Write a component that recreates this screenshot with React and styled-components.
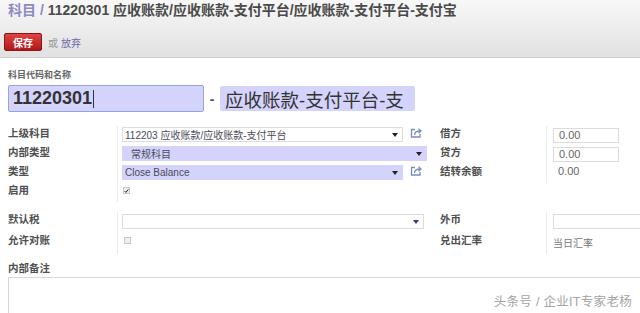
import React from "react";
import styled, { createGlobalStyle } from "styled-components";

const GlobalStyle = createGlobalStyle`
  body {
    margin: 0;
    background: #fff;
    font-family: "Liberation Sans", "Noto Sans CJK SC", sans-serif;
  }
`;

const FONT = `"Liberation Sans", "Noto Sans CJK SC", sans-serif`;

const Page = styled.div`
  position: relative;
  width: 640px;
  height: 313px;
  overflow: hidden;
  background: #fff;
`;

const Header = styled.div`
  height: 58px;
  box-sizing: border-box;
  background: linear-gradient(#f8f8f8, #e1e1e1);
  border-bottom: 1px solid #cfcfcf;
  padding: 1px 8px 0 4px;
`;

const Title = styled.h1`
  margin: 0 0 0 4px;
  font: bold 14px/18px ${FONT};
  color: #4a4a4a;
  white-space: nowrap;
`;

const Crumb = styled.span`
  color: #8a8ac4;
`;

const Actions = styled.div`
  display: flex;
  align-items: center;
  gap: 6px;
  margin-top: 14px;
  font: 10px ${FONT};
`;

const SaveButton = styled.button`
  width: 38px;
  height: 18px;
  padding: 0;
  background: linear-gradient(#e04444, #b01818);
  border: 1px solid #8c1414;
  border-radius: 2px;
  color: #fff;
  font: bold 10px ${FONT};
`;

const Or = styled.span`
  color: #999;
`;

const Discard = styled.span`
  color: #6a6aaa;
  margin-left: -3px;
`;

const Sheet = styled.div`
  padding-left: 8px;
`;

const SmallLabel = styled.div`
  margin-top: 11px;
  font: bold 9px/12px ${FONT};
  color: #666;
`;

const NameRow = styled.div`
  display: flex;
  align-items: center;
  margin-top: 4px;
`;

const BigInput = styled.div`
  box-sizing: border-box;
  width: ${(p) => p.$w}px;
  height: ${(p) => p.$h}px;
  background: #d3d3fb;
  border: 1px solid ${(p) => (p.$focus ? "#8fa6e0" : "#d3d3fb")};
  border-radius: 2px;
  display: flex;
  align-items: center;
  padding-left: 4px;
  color: #333;
  white-space: nowrap;
  overflow: hidden;
  font: ${(p) => (p.$bold ? "bold 18px" : "18.5px")} ${FONT};
`;

const Caret = styled.span`
  display: inline-block;
  width: 1px;
  height: 18px;
  background: #333;
  margin-left: 1px;
`;

const Dash = styled.span`
  width: 16px;
  text-align: center;
  font: bold 14px ${FONT};
  color: #555;
`;

const Section = styled.div`
  display: flex;
  margin-top: ${(p) => p.$top}px;
`;

const Group = styled.div`
  display: grid;
  grid-template-columns: ${(p) => p.$cols};
  grid-auto-rows: ${(p) => p.$row}px;
  margin-right: ${(p) => p.$gap || 0}px;
`;

const Label = styled.div`
  font: bold 10.5px/14px ${FONT};
  color: #505050;
  white-space: nowrap;
`;

const Value = styled.div`
  border-left: 1px solid #ebebeb;
  padding-left: ${(p) => p.$pad}px;
  display: flex;
  align-items: flex-start;
  gap: 7px;
  padding-top: ${(p) => p.$pt || 1}px;
  font: ${(p) => p.$size || 11}px ${FONT};
  color: ${(p) => p.$color || "#666"};
  white-space: nowrap;
`;

const Select = styled.div`
  box-sizing: border-box;
  width: ${(p) => p.$w}px;
  height: 15px;
  background: ${(p) => (p.$req ? "#d3d3fb" : "#fff")};
  border: 1px solid ${(p) => (p.$req ? "#d3d3fb" : "#dcdcdc")};
  display: flex;
  align-items: center;
  justify-content: space-between;
  padding: 0 4px 0 ${(p) => p.$indent || 2}px;
  font: 10px ${FONT};
  color: #4a4a5a;
  white-space: nowrap;
  overflow: hidden;
`;

const Arrow = styled.span`
  width: 0;
  height: 0;
  border-left: 3px solid transparent;
  border-right: 3px solid transparent;
  border-top: 4px solid ${(p) => p.$color || "#222"};
`;

const NumInput = styled.div`
  box-sizing: border-box;
  width: ${(p) => p.$w || 66}px;
  height: 15px;
  border: 1px solid #dcdcdc;
  padding-left: 5px;
  font: 11px/13px ${FONT};
  color: #666;
`;

const Check = styled.span`
  box-sizing: border-box;
  display: inline-flex;
  align-items: center;
  justify-content: center;
  width: 7px;
  height: 7px;
  margin-top: ${(p) => p.$mt || 3}px;
  border: 1px solid #c8c8c8;
  background: #f0f0f0;
`;

const Notes = styled.div`
  margin-top: 7px;
`;

const TextArea = styled.div`
  margin-top: 2px;
  height: 40px;
  border-top: 1px solid #d8d8d8;
  border-left: 1px solid #d8d8d8;
`;

const Watermark = styled.div`
  position: absolute;
  right: 8px;
  bottom: 3px;
  font: 12.5px ${FONT};
  color: #a4a4a4;
  letter-spacing: 0.3px;
  text-shadow: 0 0 2px #fff;
`;

const OpenIcon = () => (
  <svg width="13" height="11" viewBox="0 0 13 11" fill="none" stroke="#7a8cbc" strokeWidth="1.3">
    <path d="M5 2.5H1.5V10H10V7" />
    <path d="M4.5 8C4.5 5.5 6.5 4 10 4" />
    <path d="M8.5 1.8L11 4L8.5 6.2" />
  </svg>
);

const Tick = () => (
  <svg width="6" height="6" viewBox="0 0 6 6" fill="none" stroke="#222" strokeWidth="1.2">
    <path d="M0.8 3.2L2.3 4.7L5.2 1" />
  </svg>
);

export default function App() {
  return (
    <Page>
      <GlobalStyle />
      <Header>
        <Title>
          <Crumb>科目 / </Crumb>11220301 应收账款/应收账款-支付平台/应收账款-支付平台-支付宝
        </Title>
        <Actions>
          <SaveButton>保存</SaveButton>
          <Or>或</Or>
          <Discard>放弃</Discard>
        </Actions>
      </Header>

      <Sheet>
        <SmallLabel>科目代码和名称</SmallLabel>
        <NameRow>
          <BigInput $w={196} $h={27} $bold $focus>
            11220301
            <Caret />
          </BigInput>
          <Dash>-</Dash>
          <BigInput $w={195} $h={25}>
            应收账款-支付平台-支
          </BigInput>
        </NameRow>

        <Section $top={14}>
          <Group $cols="109px 310px" $row={19} $gap={13}>
            <Label>上级科目</Label>
            <Value $pad={4}>
              <Select $w={281}>
                112203 应收账款/应收账款-支付平台
                <Arrow />
              </Select>
              <OpenIcon />
            </Value>
            <Label>内部类型</Label>
            <Value $pad={4}>
              <Select $w={305} $req $indent={8}>
                常规科目
                <Arrow />
              </Select>
            </Value>
            <Label>类型</Label>
            <Value $pad={4}>
              <Select $w={281} $req>
                Close Balance
                <Arrow />
              </Select>
              <OpenIcon />
            </Value>
            <Label>启用</Label>
            <Value $pad={5}>
              <Check>
                <Tick />
              </Check>
            </Value>
          </Group>
          <Group $cols="106px 200px" $row={19}>
            <Label>借方</Label>
            <Value $pad={6} $pt={2}>
              <NumInput>0.00</NumInput>
            </Value>
            <Label>贷方</Label>
            <Value $pad={6} $pt={2}>
              <NumInput>0.00</NumInput>
            </Value>
            <Label>结转余额</Label>
            <Value $pad={11}>0.00</Value>
          </Group>
        </Section>

        <Section $top={10}>
          <Group $cols="109px 310px" $row={21} $gap={13}>
            <Label>默认税</Label>
            <Value $pad={4} $pt={2}>
              <Select $w={302}>
                <span />
                <Arrow $color="#2a3f7a" />
              </Select>
            </Value>
            <Label>允许对账</Label>
            <Value $pad={6}>
              <Check $mt={3} />
            </Value>
          </Group>
          <Group $cols="106px 200px" $row={21}>
            <Label>外币</Label>
            <Value $pad={6} $pt={2}>
              <NumInput $w={120} />
            </Value>
            <Label>兑出汇率</Label>
            <Value $pad={6} $pt={2} $size={10} $color="#777">
              当日汇率
            </Value>
          </Group>
        </Section>

        <Notes>
          <Label>内部备注</Label>
          <TextArea />
        </Notes>
      </Sheet>

      <Watermark>头条号 / 企业IT专家老杨</Watermark>
    </Page>
  );
}
